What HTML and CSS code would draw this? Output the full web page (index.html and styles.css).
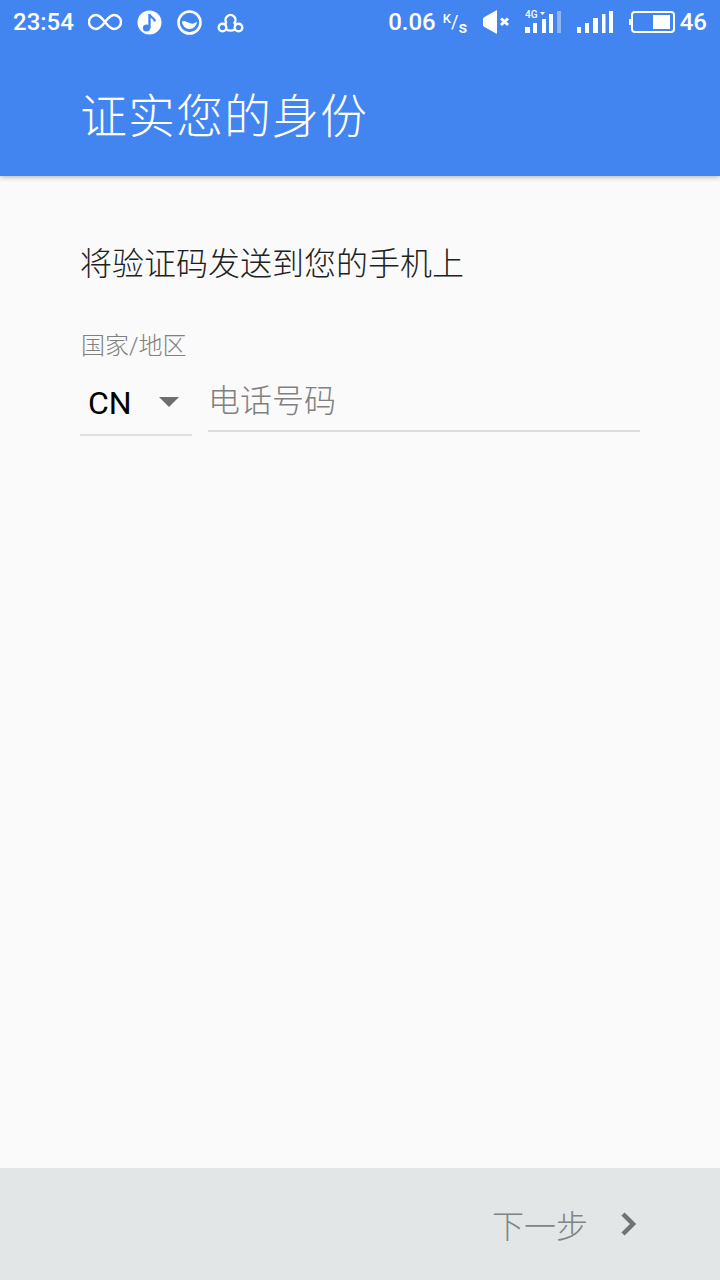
FILE: index.html
```html
<!DOCTYPE html>
<html lang="zh-CN">
<head>
<meta charset="utf-8">
<title>证实您的身份</title>
<link rel="stylesheet" href="styles.css">
</head>
<body>
<div class="app">
  <header class="header">
    <div class="status">
      <div class="status-left">
        <span class="time">23:54</span>
        <svg class="ic" width="34" height="18" viewBox="0 0 34 18"><path d="M17 9C14 5 11.500 2 8 2a7 7 0 0 0 0 14c3.500 0 6-3 9-7s5.500-7 9-7a7 7 0 0 1 0 14c-3.500 0-6-3-9-7z" fill="none" stroke="#fff" stroke-width="2.400"/></svg>
        <svg class="ic" width="25" height="25" viewBox="0 0 25 25"><circle cx="12.500" cy="12.500" r="12" fill="#fff"/><path d="M12.500 18.500V4" stroke="#4285f0" stroke-width="2.400" fill="none"/><path d="M12.500 4.500c.5 3 5 3 5.500 7" stroke="#4285f0" stroke-width="2.200" fill="none"/><circle cx="9.500" cy="18" r="3.600" fill="#4285f0"/></svg>
        <svg class="ic" width="25" height="25" viewBox="0 0 25 25"><circle cx="12.500" cy="12.500" r="11" fill="none" stroke="#fff" stroke-width="2.600"/><path d="M5 11.500c2.500-1.500 4 0 7.500 1.500s5 .5 7.500-1.500a7.500 7.500 0 0 1-15 0z" fill="#fff"/></svg>
        <svg class="ic" width="27" height="22" viewBox="0 0 27 22"><g fill="none" stroke="#fff" stroke-width="2.400"><path d="M9.500 12A5 5 0 1 1 17.500 12L19 14"/><path d="M9.500 12L7.500 13.500"/><circle cx="5.500" cy="16.500" r="3.800"/><circle cx="21.500" cy="16.500" r="3.800"/><path d="M9 18.500C12 20 15 20 18 18.500"/></g></svg>
      </div>
      <div class="status-right">
        <span class="speed">0.06</span>
        <span class="unit"><sup>K</sup>/<sub>s</sub></span>
        <svg class="ic mute" width="27" height="24" viewBox="0 0 27 24"><path d="M0 9c0-1 .5-1.500 1.500-2L14 0v24L1.500 17C.5 16.500 0 16 0 15z" fill="#fff"/><path d="M18 8.500l7 6.500M25 8.500l-7 6.500" stroke="#fff" stroke-width="3"/></svg>
        <svg class="ic sig4g" width="37" height="24" viewBox="0 0 37 24"><rect x="0" y="17" width="5" height="6" fill="#fff"/><rect x="8" y="13" width="4" height="10" fill="#fff"/><rect x="17" y="9" width="4" height="14" fill="#fff"/><rect x="24" y="4" width="4" height="19" fill="#fff"/><rect x="32" y="1" width="4" height="22" fill="#8fb5f6"/><text x="0" y="8" class="tiny">4G</text><path d="M15 2h5l-2.500 3z" fill="#fff"/></svg>
        <svg class="ic sig" width="37" height="24" viewBox="0 0 37 24"><rect x="0" y="17" width="4" height="6" fill="#fff"/><rect x="8" y="13" width="4" height="10" fill="#fff"/><rect x="16" y="8" width="5" height="15" fill="#fff"/><rect x="25" y="4" width="3.500" height="19" fill="#fff"/><rect x="32" y="1" width="4" height="22" fill="#fff"/></svg>
        <svg class="ic batt" width="47" height="24" viewBox="0 0 47 24"><rect x="3" y="2" width="42" height="20" rx="3" fill="none" stroke="#fff" stroke-width="2"/><rect x="0" y="9" width="3" height="6" fill="#fff"/><rect x="24" y="5" width="17" height="14" fill="#fff"/></svg>
        <span class="level">46</span>
      </div>
    </div>
    <h1 class="title">证实您的身份</h1>
  </header>
  <main class="main">
    <p class="lead">将验证码发送到您的手机上</p>
    <div class="label">国家/地区</div>
    <div class="fields">
      <div class="country">
        <span class="cc">CN</span>
        <span class="caret"></span>
      </div>
      <div class="phone">电话号码</div>
    </div>
  </main>
  <footer class="footer">
    <span class="next">下一步</span>
    <svg class="chev" width="18" height="26" viewBox="0 0 18 26"><path d="M3 3l10 10L3 23" fill="none" stroke="#6f7374" stroke-width="4.500"/></svg>
  </footer>
</div>
</body>
</html>
```
FILE: styles.css
```css
* { box-sizing: border-box; }
html, body { margin: 0; padding: 0; }
body { width: 720px; height: 1280px; overflow: hidden; font-family: Roboto, "Noto Sans CJK SC", sans-serif; }
.app { width: 720px; height: 1280px; display: flex; flex-direction: column; background: #fafafa; }
.header { height: 176px; background: #4285f0; color: #fff; box-shadow: 0 1px 5px rgba(0,0,0,.3); position: relative; display: flex; flex-direction: column; }
.status { height: 46px; display: flex; justify-content: space-between; align-items: center; padding: 0 13px 2px 13px; }
.status-left, .status-right { display: flex; align-items: center; }
.ic { display: block; flex: none; }
.time { font-size: 24px; font-weight: 500; width: 75px; }
.status-left .ic { margin-right: 15px; }
.speed { font-size: 24px; font-weight: 500; }
.unit { font-size: 18px; font-weight: 400; width: 32px; margin-left: 7px; line-height: 20px; white-space: nowrap; }
.unit sup { font-size: 13px; font-weight: 500; vertical-align: 5px; line-height: 0; }
.unit sub { font-size: 17px; font-weight: 500; vertical-align: -5px; line-height: 0; }
.mute { margin-left: 8px; }
.sig4g { margin-left: 15px; }
.sig { margin-left: 15px; }
.batt { margin-left: 15px; }
.tiny { font-size: 10px; font-weight: 500; fill: #fff; font-family: Roboto, sans-serif; }
.level { font-size: 24px; font-weight: 500; margin-left: 4px; }
.title { margin: 37px 0 0 80px; font-size: 47px; line-height: 68px; font-weight: 300; letter-spacing: 1px; }
.main { flex: 1; padding: 0 80px; }
.lead { margin: 66px 0 0 0; font-size: 32px; line-height: 44px; font-weight: 300; color: #212121; }
.label { margin: 43px 0 0 1px; font-size: 24px; line-height: 34px; color: #808080; font-weight: 300; }
.fields { display: flex; align-items: flex-start; gap: 16px; margin-top: 19px; }
.country { width: 112px; height: 54px; border-bottom: 2px solid #e0e0e0; display: flex; align-items: center; padding: 0 0 11px 8px; }
.cc { font-size: 32px; color: #000; width: 71px; }
.caret { width: 0; height: 0; border-left: 10px solid transparent; border-right: 10px solid transparent; border-top: 10px solid #6f6f6f; margin-top: -2px; }
.phone { flex: 1; height: 50px; border-bottom: 2px solid #dcdcdc; font-size: 32px; line-height: 38px; color: #808080; font-weight: 300; }
.footer { height: 112px; background: #e2e6e7; display: flex; align-items: center; justify-content: flex-end; padding-right: 82px; }
.next { font-size: 32px; font-weight: 300; color: #808485; margin-right: 32px; }
.chev { display: block; }
```
